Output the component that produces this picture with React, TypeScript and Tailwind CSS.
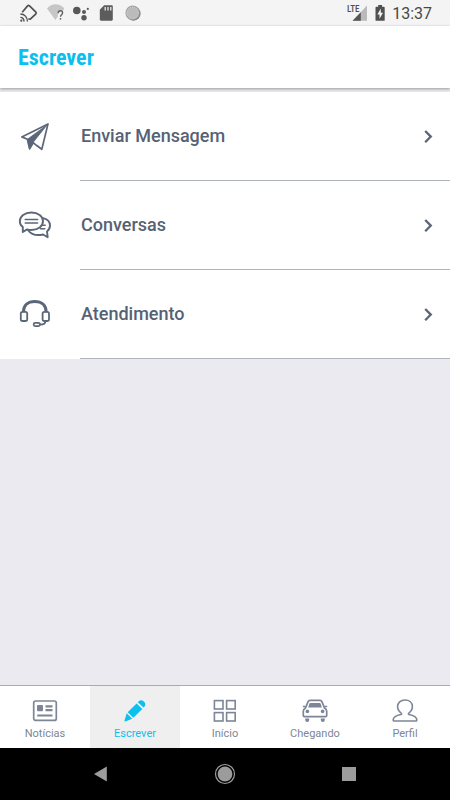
import type { ReactNode } from "react";

function SendIcon() {
  return (
    <svg width="34" height="32" viewBox="0 0 34 32" fill="none" stroke="#5b6778" strokeWidth="1.7" strokeLinejoin="round">
      <path d="M3.8 15.9 30 2.9 23.8 28.3 18.4 24.3 15.2 21.7 11.6 27.9 9.4 18.3Z" />
      <path d="M29 4 9.4 18.3l2.2 9.4 3.4-6.2Z" fill="#5b6778" strokeWidth="0.8" />
    </svg>
  );
}

function ChatIcon() {
  return (
    <svg width="34" height="32" viewBox="0 0 34 32" fill="none" stroke="#5b6778" strokeWidth="1.9" strokeLinejoin="round" strokeLinecap="round">
      <path d="M4.8 17C2.8 15.5 1.8 13.4 1.8 11.2c0-5 5-8.7 11.6-8.7S25 6.2 25 11.2s-5 8.8-11.6 8.8c-1.6 0-3-.2-4.3-.6L4.8 22Z" />
      <path d="M25.2 8.2c4.1 1 6.8 4 6.8 7.4 0 2.4-1.1 4.4-3 5.9l.7 5.7-4.6-2.7c-6.4 1.4-12.2-.4-15-4.3" />
      <path d="M7.2 9.4h12.4M7.2 13h12.4M24.5 15.2h2.7M22.5 18.7h4.3" strokeWidth="1.5" />
    </svg>
  );
}

function HeadsetIcon() {
  return (
    <svg width="34" height="32" viewBox="0 0 34 32" fill="none" stroke="#5b6778">
      <path d="M5.4 13.2C5.4 6.2 10.2 2.4 16.8 2.4s11.4 3.8 11.4 10.8" strokeWidth="3" />
      <rect x="2.8" y="12.8" width="6.4" height="9.2" rx="1.8" strokeWidth="1.8" />
      <rect x="24.6" y="12.8" width="6.4" height="9.2" rx="1.8" strokeWidth="1.8" />
      <path d="M27.4 22c0 2.6-1.2 3.6-5.3 3.6" strokeWidth="2" />
      <rect x="15.6" y="23.9" width="6.4" height="3.2" rx="1.6" strokeWidth="1.7" />
    </svg>
  );
}

function ChevronIcon() {
  return (
    <svg width="10" height="14" viewBox="0 0 10 14" fill="none" stroke="#5b6778" strokeWidth="2.3">
      <path d="M2.2 2 7.8 7.6 2.2 13.2" />
    </svg>
  );
}

function NewsIcon() {
  return (
    <svg width="26" height="26" viewBox="0 0 26 26" fill="none" stroke="#7d8696">
      <rect x="1.7" y="3" width="22.6" height="19.4" rx="2" strokeWidth="1.7" />
      <rect x="5" y="7" width="6" height="6.2" rx="1" fill="#7d8696" stroke="none" />
      <path d="M13.5 8.3H20.5M13.5 12.2H20.5M5.2 17.5H20.5" strokeWidth="2.2" />
    </svg>
  );
}

function PencilIcon() {
  return (
    <svg width="26" height="26" viewBox="0 0 26 26" fill="#0bbfee">
      <path d="M16.8 3.2c1.4-1.4 3.3-1.4 4.7 0l.8.8c1.4 1.4 1.4 3.2.2 4.5l-1 1-5.7-5.3Z" />
      <path d="m14.6 5.4 5.7 5.5-9 8.9-5.6-5.6Z" />
      <path d="m4.7 15.2 5.5 5.6-6.9 2.6c-.6.2-1-.3-.8-.8Z" />
    </svg>
  );
}

function GridIcon() {
  return (
    <svg width="26" height="26" viewBox="0 0 26 26" fill="none" stroke="#7d8696" strokeWidth="1.6">
      <rect x="2.4" y="2.6" width="8.6" height="8.4" />
      <rect x="14.6" y="2.6" width="8.6" height="8.4" />
      <rect x="2.4" y="14.6" width="8.6" height="8.4" />
      <rect x="14.6" y="14.6" width="8.6" height="8.4" />
    </svg>
  );
}

function CarIcon() {
  return (
    <svg width="26" height="26" viewBox="0 0 26 26" fill="none" stroke="#7d8696" strokeWidth="1.7" strokeLinejoin="round">
      <path d="M3.3 10.3 6.1 3.6C6.5 2.6 7 2.3 8 2.3h10c1 0 1.5.3 1.9 1.3l2.8 6.7c1.4.7 2 1.6 2 3v4.2c0 .8-.4 1.1-1.1 1.1H2.4c-.7 0-1.1-.3-1.1-1.1v-4.2c0-1.4.6-2.3 2-3Z" />
      <path d="M8.4 4.9h9.2c.6 0 .9.2 1.1.8l1.1 3.8H6.2l1.1-3.8c.2-.6.5-.8 1.1-.8Z" fill="#7d8696" stroke="none" />
      <path d="M.8 8.5h2.6M22.6 8.5h2.6" />
      <circle cx="5.4" cy="13.4" r="1.8" fill="#7d8696" stroke="none" />
      <circle cx="20.6" cy="13.4" r="1.8" fill="#7d8696" stroke="none" />
      <path d="M3.2 20.4h4v1.6a2 2 0 0 1-4 0ZM18.8 20.4h4v1.6a2 2 0 0 1-4 0Z" fill="#7d8696" stroke="none" />
    </svg>
  );
}

function ProfileIcon() {
  return (
    <svg width="26" height="26" viewBox="0 0 26 26" fill="none" stroke="#7d8696" strokeWidth="1.6" strokeLinejoin="round">
      <path d="M9.4 15.4C6.9 13.6 5.6 11.2 5.6 8.6c0-4 3-6.6 7.4-6.6s7.4 2.6 7.4 6.6c0 2.6-1.3 5-3.8 6.8-.4.5-.2.9.5 1.1 4.9 1 7.4 2.1 7.7 5.2.1.9-.3 1.3-1.1 1.3H2.3c-.8 0-1.2-.4-1.1-1.3.3-3.1 2.8-4.2 7.7-5.2.7-.2.9-.6.5-1.1Z" />
    </svg>
  );
}

function StatusBar() {
  return (
    <div className="flex h-[26px] items-center justify-between bg-[#f4f4f4] pr-[18px] pl-5">
      <div className="flex items-center gap-2">
        <svg width="19" height="20" viewBox="0 0 19 20" fill="none" stroke="#505050" strokeWidth="1.7">
          <path d="M2.2 9.2 7.6 2.9c.5-.6 1-.7 1.7-.2l6.6 6.5c.5.6.5 1 0 1.6l-5.6 5.4-2-.2" />
          <path d="M.4 11c4.2 0 7 3.2 7 7.4M.4 14.4c2.2 0 3.6 1.6 3.6 4" strokeWidth="1.4" />
          <circle cx="1.3" cy="17.7" r="1.1" fill="#505050" stroke="none" />
        </svg>
        <svg width="18" height="20" viewBox="0 0 18 20">
          <path d="M0 5.5C5-.1 12-.1 17.4 5.5L15.6 8C12.5 7 10.8 10 10.8 13.5L8.4 17Z" fill="#c6c6c6" />
          <path d="M11.2 10.2c0-1.6.8-2.4 2.2-2.4s2.2.8 2.2 2c0 1.8-2.1 2-2.1 4" fill="none" stroke="#606060" strokeWidth="1.4" />
          <circle cx="13.5" cy="15.8" r=".9" fill="#606060" />
        </svg>
        <svg width="18" height="20" viewBox="0 0 18 20" fill="#585858">
          <circle cx="3.8" cy="7.5" r="3.8" />
          <circle cx="11" cy="9" r="2" />
          <circle cx="14.8" cy="5.9" r="1.1" />
          <circle cx="11" cy="14.8" r="2.7" />
        </svg>
        <svg width="16" height="20" viewBox="0 0 16 20">
          <path d="M5.2 2.3h7.4c.7 0 1.2.5 1.2 1.2v13c0 .7-.5 1.2-1.2 1.2H2c-.7 0-1.2-.5-1.2-1.2V6.8Z" fill="#5c5c5c" />
          <path d="M6.2 4v3.6M9 4v3.6M11.8 4v3.6" stroke="#e8e8e8" strokeWidth="1.3" />
        </svg>
        <svg width="18" height="20" viewBox="0 0 18 20">
          <circle cx="10.4" cy="10.5" r="7.2" fill="#777" />
          <circle cx="9.6" cy="9.8" r="7.2" fill="#a2a2a2" />
          <circle cx="9.6" cy="9.8" r="5.8" fill="#bbb" stroke="#ddd" strokeWidth="1" strokeDasharray="1 1" />
        </svg>
      </div>
      <div className="flex items-center gap-1.5">
        <svg width="20" height="20" viewBox="0 0 20 20" className="font-['Roboto_Condensed','Liberation_Sans_Narrow',Roboto,sans-serif]">
          <path d="M20 2.6v15.2H5.6Z" fill="#bababa" />
          <path d="M13.8 9.2v8.6H5.6Z" fill="#555" />
          <path d="M0 1h13v8H0Z" fill="#f4f4f4" />
          <text x="0" y="9" fontSize="9" fontWeight="500" fill="#505050">
            LTE
          </text>
        </svg>
        <svg width="13" height="20" viewBox="0 0 13 20">
          <path d="M5.2 2H9v1.8h1.8c.6 0 .9.3.9.9v12.2c0 .6-.3.9-.9.9H3.4c-.6 0-.9-.3-.9-.9V4.7c0-.6.3-.9.9-.9h1.8Z" fill="#505050" />
          <path d="M7.8 5.6 4.4 11.4h2.1v4.3l3.5-6H7.8Z" fill="#f4f4f4" />
        </svg>
        <span className="pt-0.5 text-base leading-5 text-[#484848]">13:37</span>
      </div>
    </div>
  );
}

function MenuRow({ icon, label }: { icon: ReactNode; label: string }) {
  return (
    <li>
      <a href="#" className="flex h-[89px] items-stretch bg-white">
        <span className="flex w-20 shrink-0 items-center pl-[18px]">{icon}</span>
        <span className="flex flex-1 items-center justify-between border-b border-[#afb4bb] pr-[17px] pl-px text-lg font-medium text-[#566274]">
          {label}
          <ChevronIcon />
        </span>
      </a>
    </li>
  );
}

const tabs = [
  { label: "Notícias", icon: <NewsIcon /> },
  { label: "Escrever", icon: <PencilIcon />, active: true },
  { label: "Início", icon: <GridIcon /> },
  { label: "Chegando", icon: <CarIcon /> },
  { label: "Perfil", icon: <ProfileIcon /> },
];

export default function App() {
  return (
    <div className="flex min-h-screen flex-col bg-[#ebeaf0] font-['Roboto',sans-serif]">
      <StatusBar />
      <header className="mb-1 bg-white px-[18px] pt-[17px] pb-[15px] shadow-[0_1px_3px_rgba(0,0,0,0.35)]">
        <h1 className="font-['Roboto_Condensed','Liberation_Sans_Narrow',Roboto,sans-serif] text-[22px] leading-[30px] font-bold text-[#0bbfee]">
          Escrever
        </h1>
      </header>
      <main className="flex-1">
        <ul>
          <MenuRow icon={<SendIcon />} label="Enviar Mensagem" />
          <MenuRow icon={<ChatIcon />} label="Conversas" />
          <MenuRow icon={<HeadsetIcon />} label="Atendimento" />
        </ul>
      </main>
      <nav className="grid grid-cols-5 border-t border-[#a9abb8] bg-white">
        {tabs.map((tab) => (
          <a
            key={tab.label}
            href="#"
            className={
              tab.active
                ? "flex flex-col items-center gap-0.5 bg-[#efefef] pt-3 pb-1.5 text-[#0bbfee]"
                : "flex flex-col items-center gap-0.5 pt-3 pb-1.5 text-[#7d8696]"
            }
          >
            {tab.icon}
            <span className="text-[11px] leading-4">{tab.label}</span>
          </a>
        ))}
      </nav>
      <div className="flex h-[52px] items-center justify-center gap-[106px] bg-black">
        <button aria-label="Voltar">
          <svg width="14" height="16" viewBox="0 0 14 16" fill="#9c9c9c">
            <path d="M12.8.6v14.8L0 8Z" />
          </svg>
        </button>
        <button aria-label="Tela inicial">
          <svg width="22" height="22" viewBox="0 0 22 22" fill="none" stroke="#9c9c9c">
            <circle cx="11" cy="11" r="9.5" strokeWidth="1.2" />
            <circle cx="11" cy="11" r="7.4" fill="#9c9c9c" stroke="none" />
          </svg>
        </button>
        <button aria-label="Recentes">
          <svg width="14" height="14" viewBox="0 0 14 14" fill="#9c9c9c">
            <rect width="14" height="14" />
          </svg>
        </button>
      </div>
    </div>
  );
}
